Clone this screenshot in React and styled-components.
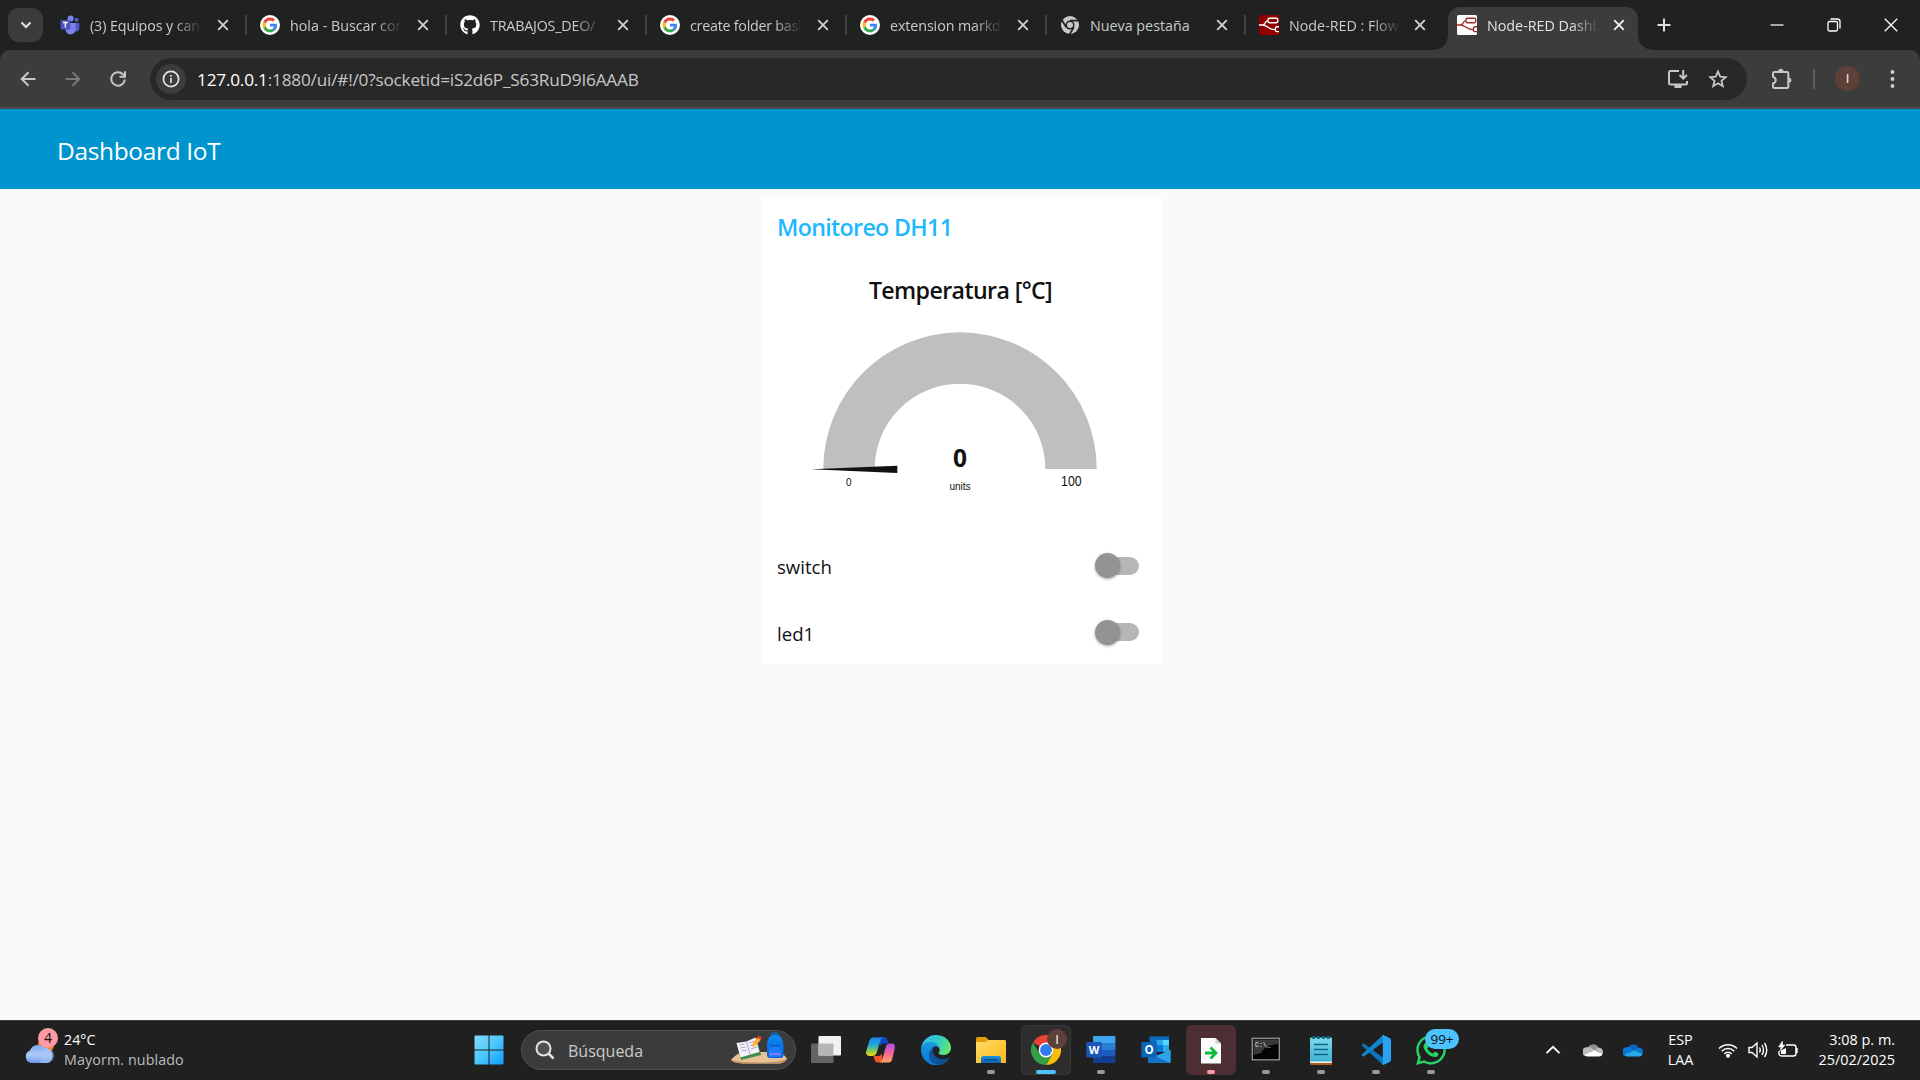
import React from "react";
import styled, { createGlobalStyle, css } from "styled-components";
import { FaGithub, FaWhatsapp } from "react-icons/fa";

const Global = createGlobalStyle`
  * { box-sizing: border-box; }
  body { margin: 0; background: #fafafa; overflow: hidden; }
  svg { display: block; flex: none; }
`;

const ui = `"Open Sans", "Noto Sans", sans-serif`;

const Screen = styled.div`
  width: 1920px;
  height: 1080px;
  display: flex;
  flex-direction: column;
  font-family: ${ui};
  white-space: nowrap;
`;

/* ---------- browser tab strip ---------- */
const TabStrip = styled.div`
  height: 50px;
  background: #202222;
  display: flex;
  align-items: center;
  padding-left: 8px;
`;
const TabSearch = styled.div`
  width: 35px;
  height: 34px;
  border-radius: 11px;
  background: #3b3b3b;
  display: grid;
  place-items: center;
  margin-right: 3px;
`;
const Tab = styled.div`
  width: ${(p) => (p.$active ? 190 : p.$w || 200)}px;
  height: ${(p) => (p.$active ? 43 : 50)}px;
  display: flex;
  align-items: center;
  padding-left: ${(p) => (p.$active ? 9 : 14)}px;
  color: ${(p) => (p.$active ? "#e3e3e3" : "#c9c9c9")};
  position: relative;
  ${(p) =>
    p.$active &&
    css`
      align-self: flex-end;
      background: #3c3c3c;
      border-radius: 12px 12px 0 0;
      padding-bottom: 7px;
      padding-top: 0;
      &::before,
      &::after {
        content: "";
        position: absolute;
        bottom: 0;
        width: 14px;
        height: 14px;
      }
      &::before {
        left: -14px;
        background: radial-gradient(circle at 0 0, transparent 13.5px, #3c3c3c 14px);
      }
      &::after {
        right: -14px;
        background: radial-gradient(circle at 100% 0, transparent 13.5px, #3c3c3c 14px);
      }
    `}
`;
const TabTitle = styled.div`
  width: 112px;
  margin-left: 10px;
  overflow: hidden;
  font-size: 14.3px;
  line-height: 22px;
  letter-spacing: ${(p) => p.$ls || 0}px;
  padding-top: 1px;
  ${(p) => !p.$full && css`mask-image: linear-gradient(to right, #000 84px, transparent 112px);`}
`;
const TabClose = styled.div`
  width: 20px;
  display: grid;
  place-items: center;
  margin-left: ${(p) => p.$ml ?? 11}px;
`;
const TabSep = styled.div`
  width: 2px;
  height: 20px;
  margin-left: auto;
  margin-right: -1px;
  background: #414343;
`;
const WinControls = styled.div`
  margin-left: auto;
  display: flex;
  align-items: center;
  height: 48px;
  padding-right: 1px;
`;
const WinButton = styled.div`
  width: 57px;
  display: grid;
  place-items: center;
`;
const NewTab = styled.div`
  margin-left: 19px;
`;

/* ---------- toolbar ---------- */
const ToolbarBack = styled.div`
  height: 59px;
  background: #202222;
`;
const Toolbar = styled.div`
  height: 59px;
  background: #3c3c3c;
  border-radius: 10px 10px 0 0;
  border-bottom: 2px solid #4a4a4a;
  display: flex;
  align-items: center;
`;
const NavButton = styled.div`
  width: 45px;
  display: grid;
  place-items: center;
`;
const NavGroup = styled.div`
  display: flex;
  padding-left: 5px;
  width: 150px;
`;
const Omnibox = styled.div`
  width: 1597px;
  height: 42px;
  border-radius: 21px;
  background: #282828;
  display: flex;
  align-items: center;
  padding: 0 19px 0 6px;
`;
const InfoBadge = styled.div`
  width: 30px;
  height: 30px;
  border-radius: 50%;
  background: #3c3c3c;
  display: grid;
  place-items: center;
`;
const Url = styled.div`
  margin-left: 11px;
  margin-right: auto;
  font-size: 17.2px;
  letter-spacing: -0.2px;
  padding-top: 1px;
  color: #c7c7c7;
  b { font-weight: 400; color: #fff; }
`;
const OmniIcons = styled.div`
  display: flex;
  gap: 19px;
`;
const ToolSep = styled.div`
  width: 2px;
  height: 20px;
  background: #5c5c5c;
  margin-left: 20px;
`;
const Profile = styled.div`
  width: 65px;
  display: grid;
  place-items: center;
`;
const Avatar = styled.div`
  width: ${(p) => p.$size}px;
  height: ${(p) => p.$size}px;
  border-radius: 50%;
  background: #5d4037;
  color: #f3eeec;
  font: 13px "Liberation Sans", sans-serif;
  display: grid;
  place-items: center;
`;
const ToolEnd = styled.div`
  display: flex;
  align-items: center;
  flex: 1;
  padding-left: 22px;
`;

/* ---------- dashboard page ---------- */
const PageHeader = styled.header`
  height: 80px;
  background: #0094ce;
  color: #fff;
  display: flex;
  align-items: center;
  padding: 3px 0 0 57px;
  font-size: 24.5px;
  letter-spacing: -0.35px;
`;
const PageBody = styled.main`
  flex: 1;
  background: #fafafa;
  display: flex;
  justify-content: center;
  align-items: flex-start;
  padding: 8px 0 0 2px;
`;
const Card = styled.section`
  width: 400px;
  height: 467px;
  background: #fff;
  padding: 0 17px 0 16px;
  display: flex;
  flex-direction: column;
`;
const CardTitle = styled.h1`
  margin: 0;
  height: 62px;
  padding-top: 13px;
  line-height: 34px;
  font-size: 23.2px;
  font-weight: 600;
  color: #1fb8ff;
  letter-spacing: -0.66px;
`;
const GaugeTitle = styled.h2`
  margin: 0;
  height: 66px;
  padding-top: 14px;
  line-height: 34px;
  text-align: center;
  font-size: 23.2px;
  font-weight: 600;
  color: #111;
  letter-spacing: -0.62px;
`;
const Gauge = styled.svg`
  width: 367px;
  height: 206px;
`;
const SwitchRow = styled.div`
  height: 66.5px;
  display: flex;
  justify-content: space-between;
  align-items: center;
  padding: 5px 5px 0 0;
  font-size: 18.6px;
  color: #111;
`;
const Track = styled.div`
  width: 44px;
  height: 18px;
  border-radius: 9px;
  background: linear-gradient(to right, transparent 8px, #b6b6b6 8px);
  display: flex;
  align-items: center;
  margin-top: -2px;
`;
const Thumb = styled.div`
  width: 25px;
  height: 25px;
  border-radius: 50%;
  background: #939393;
  box-shadow: 0 1px 3px rgba(0, 0, 0, 0.35);
`;

/* ---------- taskbar ---------- */
const Taskbar = styled.footer`
  height: 60px;
  background: #202020;
  border-top: 1px solid #3d4141;
  display: flex;
  align-items: center;
  padding-bottom: 1px;
  color: #fff;
`;
const Weather = styled.div`
  width: 464px;
  padding-left: 24px;
  display: flex;
  align-items: center;
  gap: 5px;
`;
const WeatherText = styled.div`
  font-size: 14.3px;
  line-height: 20px;
  div + div { color: #bdbdbd; letter-spacing: 0.1px; }
`;
const Slot = styled.div`
  width: 50px;
  height: 50px;
  margin-right: 5px;
  border-radius: 6px;
  display: flex;
  flex-direction: column;
  align-items: center;
  padding-top: 10px;
  position: relative;
  background: ${(p) => p.$bg || "transparent"};
  ${(p) => p.$edge && css`box-shadow: inset 0 0 0 1px #383838;`}
`;
const Dot = styled.div`
  width: ${(p) => p.$w || 8}px;
  height: 4px;
  border-radius: 2px;
  margin-top: 5px;
  background: ${(p) => p.$c || "#9a9a9a"};
`;
const Search = styled.div`
  width: 275px;
  height: 40px;
  border-radius: 20px;
  background: #3b3b3b;
  border: 1px solid #505050;
  display: flex;
  align-items: center;
  margin: 0 5px 0 2px;
  padding: 0 6px 0 13px;
  color: #cbcbcb;
  font-size: 16px;
`;
const SearchLabel = styled.span`
  margin: 0 auto 0 13px;
  padding-top: 1px;
`;
const CornerAvatar = styled.div`
  position: absolute;
  left: 26px;
  top: 4px;
`;
const WhatsappIcon = styled(FaWhatsapp)`
  margin: -2px 0;
`;
const CountBadge = styled.div`
  position: absolute;
  left: 19px;
  top: 4px;
  width: 34px;
  height: 20px;
  border-radius: 10px;
  background: #4cc2ff;
  color: #111;
  font-size: 13.5px;
  line-height: 20px;
  text-align: center;
`;
const Tray = styled.div`
  margin-left: auto;
  display: flex;
  align-items: center;
  padding-right: 25px;
`;
const TrayText = styled.div`
  font-size: 14.4px;
  line-height: 20px;
  text-align: ${(p) => p.$align};
  width: ${(p) => p.$w}px;
`;
const TrayIcon = styled.div`
  width: ${(p) => p.$w}px;
  display: grid;
  place-items: center;
`;

/* ---------- icons ---------- */
const GoogleIcon = () => (
  <svg width="20" height="20" viewBox="0 0 20 20">
    <circle cx="10" cy="10" r="10" fill="#fff" />
    <g transform="translate(2.6 2.6) scale(.308)">
      <path fill="#EA4335" d="M24 9.5c3.54 0 6.71 1.22 9.21 3.6l6.85-6.85C35.9 2.38 30.47 0 24 0 14.62 0 6.51 5.38 2.56 13.22l7.98 6.19C12.43 13.72 17.74 9.5 24 9.5z" />
      <path fill="#4285F4" d="M46.98 24.55c0-1.57-.15-3.09-.38-4.55H24v9.02h12.94c-.58 2.96-2.26 5.48-4.78 7.18l7.73 6c4.51-4.18 7.09-10.36 7.09-17.65z" />
      <path fill="#FBBC05" d="M10.53 28.59c-.48-1.45-.76-2.99-.76-4.59s.27-3.14.76-4.59l-7.98-6.19C.92 16.46 0 20.12 0 24c0 3.88.92 7.54 2.56 10.78l7.97-6.19z" />
      <path fill="#34A853" d="M24 48c6.48 0 11.93-2.13 15.89-5.81l-7.73-6c-2.15 1.45-4.92 2.3-8.16 2.3-6.26 0-11.57-4.22-13.47-9.91l-7.98 6.19C6.51 42.62 14.62 48 24 48z" />
    </g>
  </svg>
);
const TeamsIcon = () => (
  <svg width="20" height="20" viewBox="0 0 20 20">
    <circle cx="16.5" cy="4.8" r="2.1" fill="#5059c9" />
    <path d="M13 8h6.3v5.2a3.3 3.3 0 0 1-4.6 3z" fill="#5059c9" />
    <circle cx="10.6" cy="3.6" r="3" fill="#7b83eb" />
    <path d="M5.5 8h10v6.4a5 5 0 0 1-10 0z" fill="#7b83eb" />
    <rect x="0.6" y="5" width="9.6" height="9.6" rx="1" fill="#4b53bc" />
    <path d="M3 7.5h4.8M5.4 7.5v5" stroke="#fff" strokeWidth="1.3" />
  </svg>
);
const ChromeMono = () => (
  <svg width="20" height="20" viewBox="0 0 20 20">
    <circle cx="10" cy="10" r="9" fill="#c7c9cb" />
    <circle cx="10" cy="10" r="4.5" fill="#202222" />
    <path d="M10 5.6h8.2M13.8 12.2l-4.2 7.2M6.2 12.2l-4.2-7" stroke="#202222" strokeWidth="1.7" />
    <circle cx="10" cy="10" r="3" fill="#c7c9cb" />
  </svg>
);
const NodeRedIcon = ({ bg, fg }) => (
  <svg width="20" height="20" viewBox="0 0 20 20">
    <rect width="20" height="20" rx="1.5" fill={bg} />
    <g fill="none" stroke={fg} strokeWidth="1.4">
      <path d="M0 10h3.500C7 10 5.500 5.600 9 5.600M3.500 10C8.500 10 9 14.600 16 14.600" />
      <rect x="9" y="3.300" width="9.800" height="4.400" rx="1.400" />
      <path d="M20 11.800h-2q-1.600 0-1.600 1.600v1.600q0 1.600 1.600 1.600H20" />
    </g>
  </svg>
);
const CloseX = ({ c }) => (
  <svg width="12" height="12" viewBox="0 0 12 12">
    <path d="M1.2 1.2l9.6 9.6M10.8 1.2l-9.6 9.6" stroke={c || "#d0d0d0"} strokeWidth="1.9" />
  </svg>
);
const Stroke = ({ w = 20, h = 20, c = "#c7c7c7", sw = 2, children }) => (
  <svg width={w} height={h} viewBox={`0 0 ${w} ${h}`} fill="none" stroke={c} strokeWidth={sw}>
    {children}
  </svg>
);

const WeatherIcon = () => (
  <svg width="35" height="48" viewBox="0 0 35 48">
    <defs>
      <linearGradient id="cl" x1="0" y1="0" x2="0" y2="1">
        <stop offset="0" stopColor="#7aa5ec" />
        <stop offset=".55" stopColor="#b0cbf8" />
        <stop offset="1" stopColor="#6c97e6" />
      </linearGradient>
    </defs>
    <circle cx="22" cy="19" r="8" fill="#f7830f" />
    <path d="M7 37a6.6 6.6 0 0 1-1-12.6A8.6 8.6 0 0 1 20.5 21.6 8 8 0 0 1 23.5 37z" fill="url(#cl)" />
    <path d="M23.5 22.3a7.4 7.4 0 0 1 0 14.7H13c6 0 4-3 2-6 1-5 4-8.700 8.500-8.700z" fill="#a9c5f6" opacity=".5" />
    <circle cx="24" cy="12" r="10" fill="#ff99a4" />
    <text x="24" y="17" textAnchor="middle" fontSize="14" fill="#111" fontFamily='"Open Sans", sans-serif'>4</text>
  </svg>
);
const StartIcon = () => (
  <svg width="30" height="30" viewBox="0 0 30 30">
    <defs>
      <linearGradient id="st" gradientUnits="userSpaceOnUse" x1="0" y1="0" x2="30" y2="30">
        <stop offset="0" stopColor="#88dcff" />
        <stop offset=".5" stopColor="#4cc6fb" />
        <stop offset="1" stopColor="#0c9bff" />
      </linearGradient>
    </defs>
    <path fill="url(#st)" d="M1.500 .5H14.500V14.500H.5V1.500a1 1 0 0 1 1-1zM15.500 .5H28.500a1 1 0 0 1 1 1V14.500H15.500zM.5 15.500H14.500V29.500H1.500a1 1 0 0 1-1-1zM15.500 15.500H29.500V28.500a1 1 0 0 1-1 1H15.500z" />
  </svg>
);
const StudyArt = () => (
  <svg width="60" height="36" viewBox="0 0 60 36">
    <defs>
      <linearGradient id="bp" x1="0" y1="0" x2="0" y2="1">
        <stop offset="0" stopColor="#0d8cf5" />
        <stop offset="1" stopColor="#0560d8" />
      </linearGradient>
    </defs>
    <path d="M2 28q3-4 10-8h38q6 3 8 7-2 3-7 4.500H13Q5 31 2 28z" fill="#e8c194" />
    <path d="M2 28q11 2.500 28 2.500T58 27q-2 3-7 4.500H13Q5 31 2 28z" fill="#c0976b" />
    <path d="M8 13l20-6 4 16-20 5z" fill="#3c8c4b" />
    <path d="M7.500 11l10-1.500 9-4L30.500 20l-9 2.500-10 3z" fill="#f4f1fa" />
    <path d="M17.500 9.500l3.500 13M10.500 13l5-1M11.500 16l5-1M12.500 19l5-1M20 11l6-2M21 14l6-2M22 17l6-2" stroke="#9a93b5" strokeWidth=".8" />
    <path d="M23 15l1-4 5-6 3 2.500-5 6z" fill="#ffb02e" />
    <path d="M28 5.500l1.500-2L33 5.500 31.500 8z" fill="#f8312f" />
    <path d="M42.500 3q0-2 3.500-2t3.500 2" stroke="#0a6ad0" strokeWidth="1.500" fill="none" />
    <path d="M38 14Q38 2.500 46 2.500T54.500 14V23q0 3-3 3H41q-3 0-3-3z" fill="url(#bp)" />
    <path d="M40 20q0-5 6.200-5t6.300 5v4q0 1-1 1H41q-1 0-1-1z" fill="#1c7cf8" />
    <path d="M40.500 22.500q5.500-1.500 11.500 0" stroke="#a87bff" strokeWidth="1.300" fill="none" />
    <path d="M41 13q5 1.500 10 0" stroke="#0552b8" strokeWidth="1.200" fill="none" />
  </svg>
);
const TaskViewIcon = () => (
  <svg width="30" height="30" viewBox="0 0 30 30">
    <rect x="0" y="8.500" width="22.500" height="19.500" rx="1" fill="#646464" />
    <rect x="7.500" y="1" width="22.500" height="19.500" rx="1" fill="#f2f2f2" />
    <path d="M7.500 8.500H22.500V20.500H8.500a1 1 0 0 1-1-1z" fill="#b5b5b5" />
  </svg>
);
const CopilotIcon = () => (
  <svg width="30" height="30" viewBox="0 0 30 30">
    <defs>
      <linearGradient id="ca" x1="0" y1="0" x2="0" y2="1">
        <stop offset="0" stopColor="#1b8af0" />
        <stop offset=".4" stopColor="#22a6d8" />
        <stop offset=".7" stopColor="#7ccb5b" />
        <stop offset="1" stopColor="#f4d20c" />
      </linearGradient>
      <linearGradient id="cb" x1="0" y1="0" x2="0" y2="1">
        <stop offset="0" stopColor="#b04ee8" />
        <stop offset=".5" stopColor="#f4659f" />
        <stop offset="1" stopColor="#ffa45e" />
      </linearGradient>
    </defs>
    <path d="M13 2h5c2 0 3 1 3.500 3l1 3.500h-4.500c-2 0-3 1-3.500 3z" fill="#1446c0" />
    <path d="M17 27.500h-5c-2 0-3-1-3.500-3L7.500 21H12c2 0 3-1 3.500-3z" fill="#f0552c" />
    <path d="M7.500 2.500h10c-2 0-2.500 1.500-3 3l-4 12.500c-.6 2-2 3-4 3H4c-3.500 0-4.500-2-3.700-5L3 7C3.800 4 5 2.500 7.500 2.500z" fill="url(#ca)" />
    <path d="M22.500 27.500H13c2 0 2.700-1.500 3.200-3l3.800-13c.6-2 2-3 4-3h1.500c3 0 3.800 2 3.200 5L26.500 23c-.8 3.200-1.700 4.500-4 4.500z" fill="url(#cb)" />
  </svg>
);
const EdgeIcon = () => (
  <svg width="30" height="30" viewBox="0 0 256 256">
    <defs>
      <linearGradient id="e1" x1="0" y1="0" x2="1" y2="0">
        <stop offset="0" stopColor="#0c59a4" />
        <stop offset="1" stopColor="#114a8b" />
      </linearGradient>
      <linearGradient id="e2" x1=".6" y1="0" x2=".3" y2="1">
        <stop offset="0" stopColor="#1b9de2" />
        <stop offset="1" stopColor="#0a78d4" />
      </linearGradient>
      <linearGradient id="e3" x1="0" y1=".3" x2="1" y2=".6">
        <stop offset="0" stopColor="#35c1f1" />
        <stop offset=".5" stopColor="#2fc8c9" />
        <stop offset="1" stopColor="#66eb6e" />
      </linearGradient>
    </defs>
    <path fill="url(#e1)" d="M235.700 195.500a93.700 93.700 0 0 1-10.600 4.700 101.900 101.900 0 0 1-35.900 6.400c-47.300 0-88.500-32.500-88.500-74.300a31.500 31.500 0 0 1 16.400-27.300c-42.800 1.800-53.800 46.400-53.800 72.500 0 74 68.100 81.400 82.800 81.400 7.900 0 19.800-2.300 27-4.600l1.300-.4a128.300 128.300 0 0 0 66.600-52.800 4 4 0 0 0-5.300-5.600z" />
    <path fill="url(#e2)" transform="translate(-4.700 -4)" d="M110.300 246.300A79.200 79.200 0 0 1 87.600 225a80.700 80.700 0 0 1 29.500-120c3.200-1.500 8.500-4.100 15.600-4a32.400 32.400 0 0 1 25.700 13 31.900 31.900 0 0 1 6.300 18.700c0-.2 24.500-79.600-80-79.600-43.900 0-80 41.600-80 78.200a130.200 130.200 0 0 0 12.100 56 128 128 0 0 0 156.400 67 75.500 75.500 0 0 1-62.800-8z" />
    <path fill="url(#e3)" d="M152.300 148.900c-.8 1-3.300 2.500-3.300 5.700 0 2.600 1.700 5.100 4.700 7.200 14.400 10 41.500 8.700 41.600 8.700a59.600 59.600 0 0 0 30.300-8.300 61.400 61.400 0 0 0 30.400-52.900c.3-22.400-8-37.300-11.300-43.900C223.500 23.900 177.700 0 128 0A128 128 0 0 0 0 126.200c.5-36.500 36.800-66 80-66 3.500 0 23.500.3 42 10a72.600 72.600 0 0 1 30.900 29.300c6.100 10.600 7.200 24.100 7.200 29.500s-2.700 13.300-7.800 19.900z" />
  </svg>
);
const FolderIcon = () => (
  <svg width="30" height="30" viewBox="0 0 30 30">
    <defs>
      <linearGradient id="fo" x1="0" y1="0" x2="1" y2="1">
        <stop offset="0" stopColor="#ffdc66" />
        <stop offset="1" stopColor="#fbb81c" />
      </linearGradient>
      <linearGradient id="fb" x1="0" y1="0" x2="0" y2="1">
        <stop offset="0" stopColor="#1a95dd" />
        <stop offset="1" stopColor="#0c64b4" />
      </linearGradient>
    </defs>
    <path d="M0 3.500Q0 2 1.500 2H9.500L13 5v6H0z" fill="#e0a007" />
    <path d="M0 7H9.500L12.500 5H29Q30 5 30 6.500V28H0z" fill="url(#fo)" />
    <path d="M5 28V23.500Q5 21 7.500 21H22.500Q25 21 25 23.500V28z" fill="url(#fb)" />
    <path d="M9 24.800h12" stroke="#0a4a8c" strokeWidth="1.400" strokeLinecap="round" />
  </svg>
);
const ChromeIcon = () => (
  <svg width="30" height="30" viewBox="0 0 30 30">
    <path d="M15 15L2 7.500A15 15 0 0 1 28 7.500H15z" fill="#ea4335" />
    <path d="M15 7.500H28A15 15 0 0 1 15 30l6.500-11.250z" fill="#fbbc05" />
    <path d="M8.500 18.750L2 7.500A15 15 0 0 0 15 30l6.500-11.250z" fill="#34a047" />
    <circle cx="15" cy="15" r="7.400" fill="#fff" />
    <circle cx="15" cy="15" r="5.900" fill="#2f7ced" />
  </svg>
);
const WordIcon = () => (
  <svg width="30" height="30" viewBox="0 0 30 30">
    <path d="M8 1H28.600a.8.8 0 0 1 .8.8V8H7V2a1 1 0 0 1 1-1z" fill="#41a5ee" />
    <path d="M7 8H29.400V15H7z" fill="#2b7cd3" />
    <path d="M7 15H29.400V21.500H7z" fill="#185abd" />
    <path d="M7 21.500H29.400V27a1 1 0 0 1-1 1H8a1 1 0 0 1-1-1z" fill="#103f91" />
    <rect x=".3" y="7" width="15.500" height="15.500" rx="1.300" fill="#1a56b8" />
    <text x="8" y="18.700" textAnchor="middle" fontSize="11" fontWeight="700" fill="#fff" fontFamily='"Open Sans", sans-serif'>W</text>
  </svg>
);
const OutlookIcon = () => (
  <svg width="30" height="30" viewBox="0 0 30 30">
    <path d="M8.500 1.500H28V16H8.500z" fill="#0a6cc0" />
    <path d="M15.500 5H28v5.500H15.500z" fill="#28a8ea" />
    <path d="M22 5h6v5.500h-6z" fill="#50d9ff" />
    <path d="M15.500 10.500H22V17H15.500z" fill="#0078d4" />
    <path d="M22 10.500h6V17h-6z" fill="#28a8ea" />
    <path d="M7 16l11 5 11.500-6V28H8a1 1 0 0 1-1-1z" fill="#1a86d8" />
    <path d="M12 22l17.500-7V26.500a1.500 1.500 0 0 1-1.500 1.500H24z" fill="#2fa3ea" />
    <path d="M7 18l22 10H8a1 1 0 0 1-1-1z" fill="#1272c4" />
    <rect x=".3" y="7" width="15.500" height="15.500" rx="1.300" fill="#0a64b8" />
    <text x="8" y="18.800" textAnchor="middle" fontSize="11.500" fontWeight="700" fill="#fff" fontFamily='"Open Sans", sans-serif'>O</text>
  </svg>
);
const ExportIcon = () => (
  <svg width="30" height="30" viewBox="0 0 30 30">
    <path d="M5 3H19.500L25 8.500V28.500H5z" fill="#fbfbfb" />
    <path d="M19.500 3L25 8.500H19.500z" fill="#cfcfcf" />
    <path d="M9 18h9M14.500 12.500L20 18l-5.500 5.500" stroke="#0fbb34" strokeWidth="2.800" fill="none" />
  </svg>
);
const CmdIcon = () => (
  <svg width="30" height="30" viewBox="0 0 30 30">
    <rect x="1.300" y="3.300" width="27" height="21.500" fill="#050505" stroke="#8f979f" strokeWidth="1.300" />
    <path d="M2.500 4.500H27.500V9Q14 10 10 18L2.500 20z" fill="#3a3a3a" />
    <text x="4" y="11.500" fontSize="6.500" fill="#eee" fontFamily='"Liberation Mono", monospace'>C:\_</text>
  </svg>
);
const NotepadIcon = () => (
  <svg width="30" height="30" viewBox="0 0 30 30">
    <defs>
      <linearGradient id="np" x1="0" y1="0" x2="0" y2="1">
        <stop offset="0" stopColor="#7cd8ea" />
        <stop offset="1" stopColor="#3fb3d2" />
      </linearGradient>
    </defs>
    <rect x="4" y="22" width="22" height="8" rx="1" fill="#b05a18" />
    <rect x="4" y="21" width="22" height="7" rx="1" fill="#f4f4f4" />
    <rect x="4" y="2.500" width="22" height="24" rx="1" fill="url(#np)" />
    <path d="M8 9.500h14M8 14.500h14M8 19.500h14" stroke="#0b6787" strokeWidth="1.600" />
    {[7.7, 12.5, 17.5, 22.3].map((x) => (
      <circle key={x} cx={x} cy="2.400" r="1.700" fill="#0b6787" />
    ))}
  </svg>
);
const CodeIcon = () => (
  <svg width="30" height="30" viewBox="0 0 30 30">
    <path d="M2.600 8.300L.5 10.300 22 30l7-3.500L22.500 23z" fill="#0877b9" />
    <path d="M2.600 21.700L.5 19.700 22 0l7 3.500L22.500 7z" fill="#0f86cf" />
    <path d="M22 0l7 3.300q1 .5 1 1.700V25q0 1.200-1 1.700L22 30q-.6 0-.2-.8V.8Q21.400 0 22 0z" fill="#2aa4f0" />
  </svg>
);
const CloudIcon = ({ a, b, c }) => (
  <svg width="20" height="14" viewBox="0 0 20 14">
    <path d="M4.500 6A5.800 5.800 0 0 1 15.400 4.600L11 9z" fill={a} />
    <path d="M4.500 4.200Q7 3.600 9 5.500L14 9 3 13.300A4.600 4.600 0 0 1 4.500 4.200z" fill={b} />
    <path d="M12 6.800l3.400-2.200Q20 5 20 9.200q0 1-.6 2z" fill={b} />
    <path d="M1.500 11.700L12 7.200l7.600 3.800Q18.600 13.500 15.800 13.500H4.600q-2 0-3.100-1.800z" fill={c} />
  </svg>
);

const tabs = [
  { icon: <TeamsIcon />, title: "(3) Equipos y can", ls: -0.1 },
  { icon: <GoogleIcon />, title: "hola - Buscar con" },
  { icon: <FaGithub size={20} color="#fff" />, title: "TRABAJOS_DEO/", ls: -0.2 },
  { icon: <GoogleIcon />, title: "create folder bash", ls: -0.25 },
  { icon: <GoogleIcon />, title: "extension markdo", ls: -0.1 },
  { icon: <ChromeMono />, title: "Nueva pestaña", full: true, w: 199, ml: 10 },
  { icon: <NodeRedIcon bg="#8f0000" fg="#fff" />, title: "Node-RED : Flow", w: 203, ml: 9, last: true },
];

export default function App() {
  return (
    <Screen>
      <Global />
      <TabStrip>
        <TabSearch>
          <Stroke w={12} h={8} c="#e3e3e3">
            <path d="M1.500 1.500L6 6l4.500-4.500" />
          </Stroke>
        </TabSearch>
        {tabs.map((t, i) => (
          <Tab key={i} $w={t.w}>
            {t.icon}
            <TabTitle $ls={t.ls} $full={t.full}>{t.title}</TabTitle>
            <TabClose $ml={t.ml}><CloseX /></TabClose>
            {!t.last && <TabSep />}
          </Tab>
        ))}
        <Tab $active>
          <NodeRedIcon bg="#fff" fg="#a52a2a" />
          <TabTitle>Node-RED Dashb</TabTitle>
          <TabClose $ml={10}><CloseX c="#eee" /></TabClose>
        </Tab>
        <NewTab>
          <Stroke w={14} h={14} c="#dcdcdc"><path d="M7 .5v13M.5 7h13" /></Stroke>
        </NewTab>
        <WinControls>
          <WinButton>
            <Stroke w={14} h={14} c="#fff" sw={1.2}><path d="M.5 7h13" /></Stroke>
          </WinButton>
          <WinButton>
            <Stroke w={14} h={14} c="#fff" sw={1.3}>
              <rect x="1" y="3.500" width="9.500" height="9.500" rx="1.500" />
              <path d="M3.500 1h7q2.500 0 2.500 2.500v7" />
            </Stroke>
          </WinButton>
          <WinButton>
            <Stroke w={14} h={14} c="#fff" sw={1.3}><path d="M.8.8l12.400 12.400M13.200.8L.8 13.200" /></Stroke>
          </WinButton>
        </WinControls>
      </TabStrip>

      <ToolbarBack>
        <Toolbar>
          <NavGroup>
            <NavButton>
              <Stroke w={16} h={16}><path d="M15.500 8H2M8.500 1.200L1.700 8l6.800 6.800" /></Stroke>
            </NavButton>
            <NavButton>
              <Stroke w={16} h={16} c="#777"><path d="M.5 8H14M7.500 1.200L14.300 8l-6.800 6.800" /></Stroke>
            </NavButton>
            <NavButton>
              <Stroke w={18} h={18}>
                <path d="M15.800 9.500a6.800 6.800 0 1 1-1.900-5.300l2 2.300" />
                <path d="M16 1.200v5.500h-5.500" />
              </Stroke>
            </NavButton>
          </NavGroup>
          <Omnibox>
            <InfoBadge>
              <Stroke w={18} h={18} c="#e3e3e3" sw={1.7}>
                <circle cx="9" cy="9" r="7.600" />
                <path d="M9 8v5M9 5v1.800" />
              </Stroke>
            </InfoBadge>
            <Url><b>127.0.0.1</b>:1880/ui/#!/0?socketid=iS2d6P_S63RuD9I6AAAB</Url>
            <OmniIcons>
              <Stroke w={22} h={20}>
                <path d="M12 2H3.500Q2 2 2 3.500v10.500Q2 15.500 3.500 15.500h15q1.500 0 1.500-1.500V12" />
                <path d="M16.200 1v8M12.500 6l3.700 3.700L19.900 6" />
                <path d="M7.500 17.500h7" strokeWidth="3" />
              </Stroke>
              <Stroke w={20} h={20} sw={1.8}>
                <path d="M10 2.600l2.200 5.100 5.500.5-4.200 3.600 1.300 5.400L10 14.300l-4.800 2.900 1.300-5.400L2.300 8.200l5.500-.5z" />
              </Stroke>
            </OmniIcons>
          </Omnibox>
          <ToolEnd>
            <Stroke w={24} h={24} sw={2}>
              <path d="M4 6.300Q4 5 5.300 5H18q1.300 0 1.300 1.300v13.400q0 1.300-1.300 1.300H5.300Q4 21 4 19.700v-3.200q2.700-1 2.700-3.300T4 9.800z" />
              <path d="M9.300 4.500a2.500 2.500 0 0 1 5 0zM19.800 10.800a2.400 2.400 0 0 1 0 4.800z" fill="#c7c7c7" strokeWidth=".5" />
            </Stroke>
            <ToolSep />
            <Profile>
              <Avatar $size={25}>I</Avatar>
            </Profile>
            <svg width="24" height="22" viewBox="0 0 24 22" fill="#d0d0d0">
              <circle cx="12.500" cy="4" r="1.900" />
              <circle cx="12.500" cy="11" r="1.900" />
              <circle cx="12.500" cy="18" r="1.900" />
            </svg>
          </ToolEnd>
        </Toolbar>
      </ToolbarBack>

      <PageHeader>Dashboard IoT</PageHeader>
      <PageBody>
        <Card>
          <CardTitle>Monitoreo DH11</CardTitle>
          <GaugeTitle>Temperatura [°C]</GaugeTitle>
          <Gauge viewBox="777 325 367 206">
            <path d="M823.300 469a136.700 136.700 0 0 1 273.400 0h-51.400a85.300 85.300 0 0 0-170.600 0z" fill="#bfbfbf" />
            <path d="M811 469.300L897.300 465.800v7.200z" fill="#111" />
            <g textAnchor="middle" fill="#111" fontFamily='"Liberation Sans", Arial, sans-serif'>
              <text x="848.800" y="486" fontSize="10">0</text>
              <text x="1071.300" y="486" fontSize="13.800" textLength="20.500" lengthAdjust="spacingAndGlyphs">100</text>
              <text x="960" y="490" fontSize="10">units</text>
              <text x="960" y="466.500" fontSize="24.500" fontWeight="700" fontFamily='"Open Sans", sans-serif'>0</text>
            </g>
          </Gauge>
          <SwitchRow>switch<Track><Thumb /></Track></SwitchRow>
          <SwitchRow>led1<Track><Thumb /></Track></SwitchRow>
        </Card>
      </PageBody>

      <Taskbar>
        <Weather>
          <WeatherIcon />
          <WeatherText>
            <div>24°C</div>
            <div>Mayorm. nublado</div>
          </WeatherText>
        </Weather>
        <Slot><StartIcon /></Slot>
        <Search>
          <Stroke w={20} h={20} c="#e4e4e4">
            <circle cx="8.500" cy="8.500" r="7" fill="#4c5252" />
            <path d="M13.500 13.500l5 5" strokeWidth="2.500" />
          </Stroke>
          <SearchLabel>Búsqueda</SearchLabel>
          <StudyArt />
        </Search>
        <Slot><TaskViewIcon /></Slot>
        <Slot><CopilotIcon /></Slot>
        <Slot><EdgeIcon /></Slot>
        <Slot><FolderIcon /><Dot /></Slot>
        <Slot $bg="#2d2d2d" $edge>
          <ChromeIcon />
          <Dot $w={20} $c="#4cc2ff" />
          <CornerAvatar><Avatar $size={20}>I</Avatar></CornerAvatar>
        </Slot>
        <Slot><WordIcon /><Dot /></Slot>
        <Slot><OutlookIcon /></Slot>
        <Slot $bg="#4d2e32"><ExportIcon /><Dot $c="#ff99a4" /></Slot>
        <Slot><CmdIcon /><Dot /></Slot>
        <Slot><NotepadIcon /><Dot /></Slot>
        <Slot><CodeIcon /><Dot /></Slot>
        <Slot>
          <WhatsappIcon size={34} color="#25d366" />
          <Dot />
          <CountBadge>99+</CountBadge>
        </Slot>
        <Tray>
          <TrayIcon $w={20}>
            <Stroke w={16} h={10} c="#fff" sw={1.8}><path d="M1.500 8.200L8 1.800l6.500 6.400" /></Stroke>
          </TrayIcon>
          <TrayIcon $w={60}><CloudIcon a="#8f8f8f" b="#bdbdbd" c="#fff" /></TrayIcon>
          <TrayIcon $w={20}><CloudIcon a="#0364b8" b="#0a78d4" c="#28a8ea" /></TrayIcon>
          <TrayText $align="center" $w={75}>
            <div>ESP</div>
            <div>LAA</div>
          </TrayText>
          <TrayIcon $w={20}>
            <Stroke w={20} h={16} c="#fff" sw={1.5}>
              <path d="M1 6.500a12.500 12.500 0 0 1 18 0M3.700 9.300a8.700 8.700 0 0 1 12.600 0M6.300 12a5 5 0 0 1 7.400 0" />
              <circle cx="10" cy="13.800" r="1.300" fill="#fff" />
            </Stroke>
          </TrayIcon>
          <TrayIcon $w={40}>
            <Stroke w={20} h={18} c="#fff" sw={1.4}>
              <path d="M1 6.500h3L9 2v14l-5-4.500H1zM11.500 6.500q1.500 2.500 0 5M14 4q3 5 0 10M16.500 2q4.500 7 0 14" />
            </Stroke>
          </TrayIcon>
          <TrayIcon $w={20}>
            <Stroke w={20} h={18} c="#fff" sw={1.4}>
              <path d="M8 4h7.500Q18 4 18 6.500v6Q18 15 15.500 15h-12Q1 15 1 12.500V10" />
              <path d="M18.700 7v5" strokeWidth="2" />
              <path d="M3 9.500L8 7v6H3z" fill="#fff" stroke="none" />
              <path d="M4.500 0L.5 6H3L2 10l5-6H4.500z" fill="#fff" strokeWidth=".5" />
            </Stroke>
          </TrayIcon>
          <TrayText $align="right" $w={97}>
            <div>3:08 p. m.</div>
            <div>25/02/2025</div>
          </TrayText>
        </Tray>
      </Taskbar>
    </Screen>
  );
}
